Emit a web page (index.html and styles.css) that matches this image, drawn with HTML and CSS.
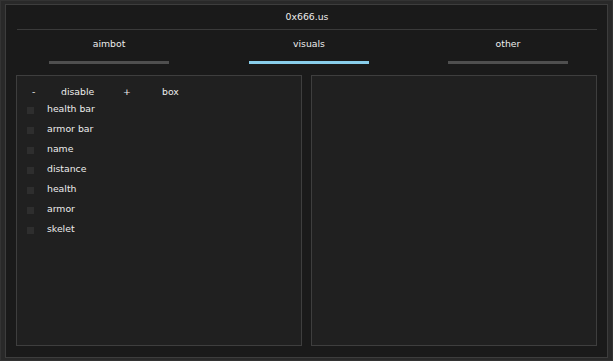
FILE: index.html
```html
<!DOCTYPE html>
<html>
<head>
<meta charset="utf-8">
<link rel="stylesheet" href="styles.css">
</head>
<body>
<div class="frame">
  <div class="window">
    <div class="title">0x666.us</div>
    <div class="sep"></div>
    <div class="tabs">
      <div class="tab"><span class="tab-label">aimbot</span><span class="bar"></span></div>
      <div class="tab active"><span class="tab-label">visuals</span><span class="bar"></span></div>
      <div class="tab"><span class="tab-label">other</span><span class="bar"></span></div>
    </div>
    <div class="panels">
      <div class="panel">
        <div class="combo">
          <span class="c-minus">-</span>
          <span class="c-val">disable</span>
          <span class="c-plus">+</span>
          <span class="c-name">box</span>
        </div>
        <div class="row"><span class="check"></span><span class="label">health bar</span></div>
        <div class="row"><span class="check"></span><span class="label">armor bar</span></div>
        <div class="row"><span class="check"></span><span class="label">name</span></div>
        <div class="row"><span class="check"></span><span class="label">distance</span></div>
        <div class="row"><span class="check"></span><span class="label">health</span></div>
        <div class="row"><span class="check"></span><span class="label">armor</span></div>
        <div class="row"><span class="check"></span><span class="label">skelet</span></div>
      </div>
      <div class="panel"></div>
    </div>
  </div>
</div>
</body>
</html>
```

FILE: styles.css
```css
* { box-sizing: border-box; }
html, body {
  margin: 0;
  padding: 0;
  background: #282828;
}
body {
  width: 613px;
  height: 361px;
  font-family: "DejaVu Sans", Verdana, sans-serif;
  font-size: 9.3px;
  color: #ededed;
}
.frame {
  width: 613px;
  height: 361px;
  border: 1px solid #333333;
  background: #292929;
  padding: 3px 4px 2px 4px;
}
.window {
  height: 100%;
  border: 1px solid #3d3d3d;
  background: #1a1a1a;
  display: flex;
  flex-direction: column;
}
.title {
  height: 24px;
  line-height: 24px;
  text-align: center;
  padding-left: 1px;
}
.sep {
  height: 1px;
  background: #3a3a3a;
  margin: 0 10px 0 11px;
}
.tabs {
  display: grid;
  grid-template-columns: 200px 200px 1fr;
  padding-left: 3px;
  height: 34px;
}
.tab {
  display: flex;
  flex-direction: column;
  align-items: center;
  padding-top: 8px;
}
.tab-label {
  height: 12px;
  line-height: 12px;
}
.bar {
  width: 120px;
  height: 3px;
  margin-top: 11px;
  background: #4f4f4f;
}
.tab.active .bar {
  background: #88cdea;
}
.panels {
  display: flex;
  gap: 9px;
  padding: 11px 10px 0 10px;
}
.panel {
  flex: 1;
  height: 271px;
  background: #202020;
  border: 1px solid #3e3e3e;
  padding-top: 8px;
}
.combo {
  display: grid;
  grid-template-columns: 29px 62px 39px auto;
  height: 16px;
  line-height: 16px;
  padding-left: 15px;
}
.row {
  display: flex;
  align-items: center;
  height: 20px;
  padding-left: 10px;
}
.check {
  width: 7px;
  height: 7px;
  background: #2e2e2e;
  margin-right: 13px;
}
.label {
  line-height: 12px;
  margin-top: -2px;
}
```
